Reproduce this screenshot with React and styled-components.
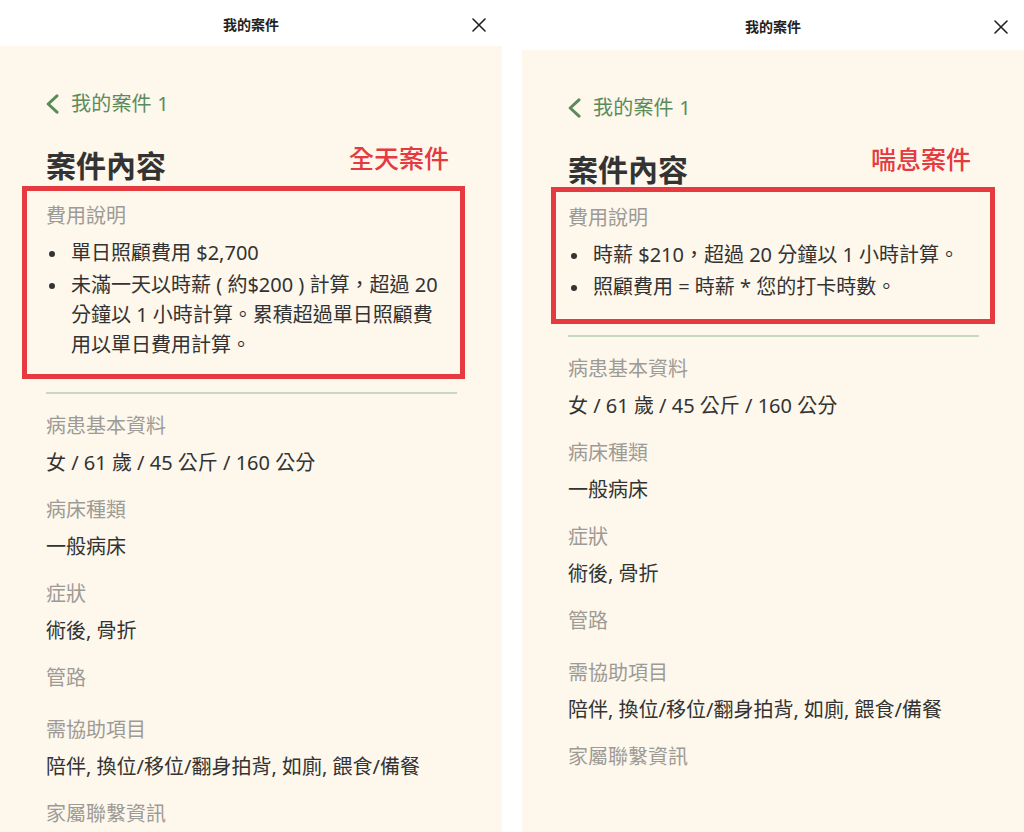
import React from 'react';
import styled, { createGlobalStyle } from 'styled-components';

const GlobalStyle = createGlobalStyle`
  html, body { margin: 0; padding: 0; background: #ffffff; }
  body {
    font-family: "Noto Sans", "Noto Sans CJK TC", sans-serif;
    color: #333333;
    -webkit-font-smoothing: antialiased;
  }
  * { box-sizing: border-box; }
`;

const Page = styled.div`
  display: flex;
  gap: 20px;
  height: 100vh;
  overflow: hidden;
  background: #ffffff;
`;

const Panel = styled.section`
  width: 502px;
  flex: 0 0 502px;
  display: flex;
  flex-direction: column;
  height: 100%;
`;

const Header = styled.header`
  height: ${(p) => p.$h}px;
  flex: 0 0 auto;
  display: grid;
  grid-template-columns: 1fr auto 1fr;
  align-items: center;
  padding: 4px 16px 0 16px;
  background: #ffffff;
`;

const HeaderTitle = styled.h1`
  grid-column: 2;
  margin: 0;
  font-size: 14px;
  line-height: 20px;
  font-weight: 700;
  color: #222222;
`;

const CloseButton = styled.button`
  grid-column: 3;
  justify-self: end;
  width: 14px;
  height: 14px;
  padding: 0;
  border: none;
  background: none;
  display: flex;
  cursor: pointer;
  color: #222222;
`;

const Body = styled.div`
  flex: 1 1 auto;
  background: #fdf7ec;
  padding: 44px 45px 0 46px;
  overflow: hidden;
`;

const BackLink = styled.a`
  display: flex;
  align-items: center;
  gap: 12px;
  height: 28px;
  font-size: 20px;
  line-height: 28px;
  color: #5b8b5b;
  text-decoration: none;
  letter-spacing: 0.2px;
`;

const HeadingRow = styled.div`
  display: flex;
  justify-content: space-between;
  align-items: flex-start;
  margin-top: 28px;
  padding-right: 8px;
`;

const Heading = styled.h2`
  margin: 0;
  font-size: 30px;
  line-height: 40px;
  font-weight: 700;
  color: #333333;
`;

const CaseTag = styled.span`
  margin-top: ${(p) => p.$shift}px;
  font-size: 25px;
  line-height: 32px;
  font-weight: 500;
  color: #e53a40;
`;

const Highlight = styled.div`
  border: 5px solid #e53a40;
  margin: ${(p) => p.$top}px ${(p) => p.$right}px ${(p) => p.$mb}px ${(p) => p.$left}px;
  padding: ${(p) => p.$pt}px 8px ${(p) => p.$pb}px ${(p) => p.$pl}px;
`;

const Label = styled.div`
  font-size: 20px;
  line-height: 26px;
  color: #9d9b96;
  margin-bottom: 5px;
`;

const Value = styled.div`
  font-size: 20px;
  line-height: 26px;
  color: #333333;
  padding-top: 6px;
`;

const BulletList = styled.ul`
  list-style: none;
  margin: 9px 0 0 0;
  padding: 0;
  display: flex;
  flex-direction: column;
  gap: 2px;
`;

const Bullet = styled.li`
  position: relative;
  padding-left: 25px;
  font-size: 20px;
  line-height: 30px;
  color: #333333;

  &::before {
    content: '';
    position: absolute;
    left: 3px;
    top: 13px;
    width: 6px;
    height: 6px;
    border-radius: 50%;
    background: #333333;
  }
`;

const Divider = styled.hr`
  margin: 0 0 19px 0;
  border: none;
  height: 2px;
  background: #cbd8c0;
`;

const FieldList = styled.div`
  display: flex;
  flex-direction: column;
  gap: 21px;
`;

const Field = styled.div`
  display: flex;
  flex-direction: column;
`;

const ChevronLeft = () => (
  <svg width="13" height="20" viewBox="0 0 13 20" fill="none">
    <polyline
      points="11,1.8 2.2,10 11,18.2"
      stroke="#5b8b5b"
      strokeWidth="3"
      strokeLinecap="round"
      strokeLinejoin="round"
    />
  </svg>
);

const CloseIcon = () => (
  <svg width="14" height="14" viewBox="0 0 14 14" fill="none">
    <path d="M1 1 L13 13 M13 1 L1 13" stroke="#222" strokeWidth="1.6" strokeLinecap="round" />
  </svg>
);

const fields = [
  { label: '病患基本資料', value: '女 / 61 歲 / 45 公斤 / 160 公分' },
  { label: '病床種類', value: '一般病床' },
  { label: '症狀', value: '術後, 骨折' },
  { label: '管路', value: '' },
  { label: '需協助項目', value: '陪伴, 換位/移位/翻身拍背, 如廁, 餵食/備餐' },
  { label: '家屬聯繫資訊', value: '' },
];

const panels = [
  {
    headerH: 46,
    tag: '全天案件',
    tagShift: -4,
    box: { top: 0, left: -24, right: -8, pt: 12, pb: 14, pl: 19, mb: 13 },
    bullets: [
      '單日照顧費用 $2,700',
      '未滿一天以時薪 ( 約$200 ) 計算，超過 20 分鐘以 1 小時計算。累積超過單日照顧費用以單日費用計算。',
    ],
  },
  {
    headerH: 50,
    tag: '喘息案件',
    tagShift: -7,
    box: { top: -3, left: -17, right: -16, pt: 13, pb: 17, pl: 12, mb: 11 },
    bullets: ['時薪 $210，超過 20 分鐘以 1 小時計算。', '照顧費用 = 時薪 * 您的打卡時數。'],
  },
];

const CasePanel = ({ data }) => (
  <Panel>
    <Header $h={data.headerH}>
      <HeaderTitle>我的案件</HeaderTitle>
      <CloseButton aria-label="關閉">
        <CloseIcon />
      </CloseButton>
    </Header>
    <Body>
      <BackLink href="#">
        <ChevronLeft />
        <span>我的案件 1</span>
      </BackLink>
      <HeadingRow>
        <Heading>案件內容</Heading>
        <CaseTag $shift={data.tagShift}>{data.tag}</CaseTag>
      </HeadingRow>
      <Highlight
        $top={data.box.top}
        $left={data.box.left}
        $right={data.box.right}
        $mb={data.box.mb}
        $pt={data.box.pt}
        $pb={data.box.pb}
        $pl={data.box.pl}
      >
        <Label>費用說明</Label>
        <BulletList>
          {data.bullets.map((b) => (
            <Bullet key={b}>{b}</Bullet>
          ))}
        </BulletList>
      </Highlight>
      <Divider />
      <FieldList>
        {fields.map((f) => (
          <Field key={f.label}>
            <Label>{f.label}</Label>
            {f.value && <Value>{f.value}</Value>}
          </Field>
        ))}
      </FieldList>
    </Body>
  </Panel>
);

export default function App() {
  return (
    <>
      <GlobalStyle />
      <Page>
        {panels.map((p) => (
          <CasePanel key={p.tag} data={p} />
        ))}
      </Page>
    </>
  );
}
